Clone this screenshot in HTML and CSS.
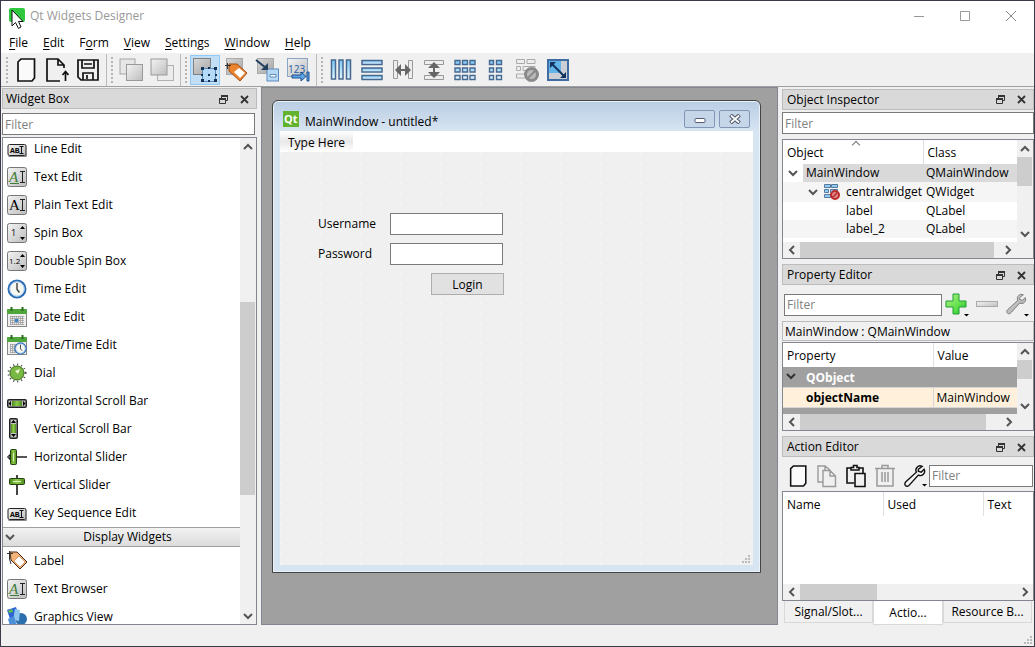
FILE: index.html
```html
<!DOCTYPE html>
<html lang="en">
<head>
    <meta charset="UTF-8">
    <meta name="viewport" content="width=device-width, initial-scale=1.0">
    <title>Qt Widgets Designer</title>
    <link rel="stylesheet" href="styles.css">
</head>
<body>

    <!-- shared icons -->
    <svg class="icon-defs" width="0" height="0" aria-hidden="true">
        <defs>
            <linearGradient id="gray" x1="0" y1="0" x2="1" y2="1">
                <stop offset="0" stop-color="#f4f4f4"/>
                <stop offset="1" stop-color="#bdbdbd"/>
            </linearGradient>
            <linearGradient id="dark-gray" x1="0" y1="0" x2="1" y2="1">
                <stop offset="0" stop-color="#d8d8d8"/>
                <stop offset="1" stop-color="#a4a4a4"/>
            </linearGradient>
            <linearGradient id="blue" x1="0" y1="0" x2="0" y2="1">
                <stop offset="0" stop-color="#7cc6f6"/>
                <stop offset="1" stop-color="#e4f5ff"/>
            </linearGradient>
            <linearGradient id="green" x1="0" y1="0" x2="1" y2="0">
                <stop offset="0" stop-color="#4c8a1c"/>
                <stop offset="0.5" stop-color="#8fcc4c"/>
                <stop offset="1" stop-color="#4c8a1c"/>
            </linearGradient>
            <linearGradient id="plus" x1="0" y1="0" x2="1" y2="1">
                <stop offset="0" stop-color="#b4f08a"/>
                <stop offset="0.6" stop-color="#5fe04a"/>
                <stop offset="1" stop-color="#1fb436"/>
            </linearGradient>
        </defs>
        <symbol id="up" viewBox="0 0 10 10"><path d="M1 7 5 3 9 7" fill="none" stroke="#555" stroke-width="2"/></symbol>
        <symbol id="down" viewBox="0 0 10 10"><path d="M1 3 5 7 9 3" fill="none" stroke="#555" stroke-width="2"/></symbol>
        <symbol id="left" viewBox="0 0 10 10"><path d="M7 1 3 5 7 9" fill="none" stroke="#555" stroke-width="2"/></symbol>
        <symbol id="right" viewBox="0 0 10 10"><path d="M3 1 7 5 3 9" fill="none" stroke="#555" stroke-width="2"/></symbol>
        <symbol id="float" viewBox="0 0 9 9"><path d="M2.500 3V1H8.500V5.500H6.500M.5 4H6.500V8.500H.5Z" fill="none" stroke="#333"/><path d="M2 1H9M0 4H7" stroke="#333" stroke-width="2"/></symbol>
        <symbol id="close" viewBox="0 0 9 9"><path d="M1 1 8 8M8 1 1 8" stroke="#333" stroke-width="1.800"/></symbol>
        <symbol id="page" viewBox="0 0 24 24"><path d="M7 1H20.500V20L18 23H4V4Z" fill="#fafafa" stroke="#111" stroke-width="1.700"/></symbol>
        <symbol id="wrench" viewBox="0 0 24 24"><path d="M20 2C16 0 12 4 14 8L3 18C0 21 4 25 7 21L16 11C20 13 24 9 22 5L19 8L16 7V5Z"/></symbol>
        <symbol id="textbox" viewBox="0 0 20 20"><rect x=".5" y=".5" width="19" height="19" rx="2" fill="url(#gray)" stroke="#777"/></symbol>
        <symbol id="linebox" viewBox="0 0 20 20">
            <rect x="1" y="5.500" width="18" height="11" rx="1.500" fill="url(#gray)" stroke="#222"/>
            <path d="M1.500 17.500H19.500V7" fill="none" stroke="#888"/>
            <path d="M12.500 7.500H16.500M12.500 14.500H16.500M14.500 7.500V14.500" stroke="#111"/>
        </symbol>
        <symbol id="ibeam" viewBox="0 0 20 20"><path d="M13 4.500H18M13 15.500H18M15.500 4V15" stroke="#222" fill="none"/></symbol>
        <symbol id="calendar" viewBox="0 0 20 20">
            <rect x=".5" y="3" width="19" height="16.500" fill="#eee" stroke="#888"/>
            <rect x="0" y="2" width="20" height="5" rx="1" fill="#4fa63a"/>
            <path d="M4.500 0V4M15.500 0V4" stroke="#2c6b20" stroke-width="2"/>
            <path d="M3 9.500H17M3 11.500H17M3 13.500H17M3 15.500H17M3 17.500H17M3.500 9V18M5.500 9V18M7.500 9V18M9.500 9V18M11.500 9V18M13.500 9V18M15.500 9V18" stroke="#999" stroke-width=".7"/>
        </symbol>
        <symbol id="clock" viewBox="0 0 20 20">
            <circle cx="10" cy="10" r="8.500" fill="#f6f6f2" stroke="#2b6cb5" stroke-width="2"/>
            <circle cx="10" cy="10" r="7.200" fill="none" stroke="#9cc4ea"/>
            <path d="M10 4V10.500L12.500 13.500" fill="none" stroke="#333" stroke-width="1.300"/>
        </symbol>
        <symbol id="tag" viewBox="0 0 20 20">
            <path d="M3 1 10 1 20 11 13 18 4 9Z" fill="#f3b47a" stroke="#4a2a10"/>
            <path d="M12 5 18 11 13 16 7 10Z" fill="#fff" stroke="#c47a3c" stroke-width=".6"/>
            <path d="M0 2.500H6M2.500 0V8L4 13" fill="none" stroke="#333"/>
        </symbol>
    </svg>

    <header class="titlebar">
        <svg class="app-icon" width="16" height="22" viewBox="0 0 16 22">
            <rect width="16" height="14" rx="2" fill="#2fc83f"/>
            <path d="M3 2V18L6.500 14.500 9.500 20.500 12 19 9.500 13.500H14Z" fill="#fff" stroke="#111"/>
        </svg>
        <h1>Qt Widgets Designer</h1>
        <div class="window-buttons">
            <button aria-label="Minimize"><svg width="12" height="12"><path d="M1 6.500H11" stroke="#999"/></svg></button>
            <button aria-label="Maximize"><svg width="12" height="12"><path d="M1.500 1.500H10.500V10.500H1.500Z" fill="none" stroke="#999"/></svg></button>
            <button aria-label="Close"><svg width="12" height="12"><path d="M1 1 11 11M11 1 1 11" stroke="#888"/></svg></button>
        </div>
    </header>

    <nav class="menubar">
        <a href="#"><u>F</u>ile</a>
        <a href="#"><u>E</u>dit</a>
        <a href="#">F<u>o</u>rm</a>
        <a href="#"><u>V</u>iew</a>
        <a href="#"><u>S</u>ettings</a>
        <a href="#"><u>W</u>indow</a>
        <a href="#"><u>H</u>elp</a>
    </nav>

    <div class="toolbar">
        <div class="tool-group">
            <button aria-label="New"><svg width="24" height="24"><use href="#page"/></svg></button>
            <button aria-label="Open"><svg width="24" height="24" fill="none" stroke="#111" stroke-width="1.700"><path d="M15 23H2V1H13L19 7V10M13 1V7H19M20.500 23V14M17.500 17 20.500 13.500 23.500 17" /></svg></button>
            <button aria-label="Save"><svg width="24" height="24" fill="none" stroke="#111" stroke-width="1.700"><path d="M2 2H22V22H5L2 19ZM6 2V10H18V2M7 22V15H17V22M11 17V21M8 6H16"/></svg></button>
        </div>
        <div class="tool-group">
            <button aria-label="Send to Back"><svg width="24" height="24"><rect x="1" y="1" width="15" height="15" fill="#e6e6e6" stroke="#a5a5a5"/><rect x="7.500" y="6.500" width="16" height="16" fill="url(#gray)" stroke="#999"/></svg></button>
            <button aria-label="Bring to Front"><svg width="24" height="24"><rect x="7.500" y="7.500" width="16" height="15" fill="#ececec" stroke="#b0b0b0"/><rect x="1" y="1" width="16" height="16" fill="url(#gray)" stroke="#999"/></svg></button>
        </div>
        <div class="tool-group">
            <button class="pressed" aria-label="Edit Widgets"><svg width="24" height="24"><rect x=".5" y=".5" width="17" height="16" fill="url(#dark-gray)" stroke="#808080"/><rect x="9.500" y="10.500" width="13" height="13" fill="#b5daf8" stroke="#5c8bbb"/><path d="M8 9h3v3h-3ZM21 9h3v3h-3ZM8 21h3v3h-3ZM21 21h3v3h-3ZM15 9h2v2h-2ZM15 16h2v2h-2ZM8 16h2v2h-2ZM22 16h2v2h-2ZM15 22h2v2h-2Z" fill="#143257"/></svg></button>
            <button aria-label="Edit Buddies"><svg width="24" height="24"><rect x="2.500" y=".5" width="16" height="16" fill="url(#dark-gray)" stroke="#aaa"/><path d="M5 6H13L23 15 16 23 5 13Z" fill="#ea8430" stroke="#a34c12"/><path d="M15 10 21 15 16 20 10 14Z" fill="#fff"/><path d="M1 7.500H7M3.500 5V11" stroke="#333"/></svg></button>
            <button aria-label="Edit Signals"><svg width="24" height="24"><rect x="2.500" y=".5" width="16" height="15" fill="url(#dark-gray)" stroke="#aaa"/><rect x="12" y="11" width="11.500" height="12" fill="#b5d8f5" stroke="#5c8bbb"/><path d="M15 16.500H21V19H15Z" fill="#fff" stroke="#5c8bbb"/><path d="M1 2 11 10" stroke="#24405f" stroke-width="2"/><path d="M13 5V12H6Z" fill="#24405f"/></svg></button>
            <button aria-label="Edit Tab Order"><svg width="24" height="24"><rect x="1.500" y=".5" width="20" height="18" fill="url(#gray)" stroke="#8aa5c4"/><text x="2" y="15" font-size="10" fill="#1f5fa8">123</text><path d="M6 17H15V14L20 18.500 15 23V20H6ZM21 14H23V23H21Z" fill="#5da5e6" stroke="#1d4f8f"/></svg></button>
        </div>
        <div class="tool-group layouts">
            <button aria-label="Lay Out Horizontally"><svg width="22" height="22" fill="url(#blue)" stroke="#46688f" stroke-width="1.500"><rect x="1.500" y="1" width="4" height="19"/><rect x="9" y="1" width="4" height="19"/><rect x="16.500" y="1" width="4" height="19"/></svg></button>
            <button aria-label="Lay Out Vertically"><svg width="22" height="22" fill="url(#blue)" stroke="#46688f" stroke-width="1.500"><rect x="1" y="1.500" width="20" height="4"/><rect x="1" y="9" width="20" height="4"/><rect x="1" y="16.500" width="20" height="4"/></svg></button>
            <button aria-label="Lay Out Horizontally in Splitter"><svg width="22" height="22"><path d="M1.500 1.500h4v18h-4ZM16.500 1.500h4v18h-4Z" fill="#eee" stroke="#999"/><path d="M3 11 9 5V17ZM19 11 13 5V17Z" fill="#666"/><path d="M7 11H15" stroke="#666" stroke-width="2"/></svg></button>
            <button aria-label="Lay Out Vertically in Splitter"><svg width="22" height="22"><path d="M1.500 1.500h19v4h-19ZM1.500 16.500h19v4h-19Z" fill="#eee" stroke="#999"/><path d="M11 3 5 9H17ZM11 19 5 13H17Z" fill="#666"/><path d="M11 7V15" stroke="#666" stroke-width="2"/></svg></button>
            <button aria-label="Lay Out in a Grid"><svg width="22" height="22" fill="url(#blue)" stroke="#46688f" stroke-width="1.400"><path d="M1 1.500h5v4h-5ZM8.500 1.500h5v4h-5ZM16 1.500h5v4h-5ZM1 9h5v4h-5ZM8.500 9h5v4h-5ZM16 9h5v4h-5ZM1 16.500h5v4h-5ZM8.500 16.500h5v4h-5ZM16 16.500h5v4h-5Z"/></svg></button>
            <button aria-label="Lay Out in a Form"><svg width="22" height="22" fill="url(#blue)" stroke="#46688f" stroke-width="1.400"><path d="M4.500 1.500h4v4h-4ZM11.500 1.500h5v4h-5ZM4.500 9h4v4h-4ZM11.500 9h5v4h-5ZM4.500 16.500h4v4h-4ZM11.500 16.500h5v4h-5Z"/></svg></button>
            <button aria-label="Break Layout"><svg width="24" height="24"><path d="M1.500 1.500h8v4h-8ZM12 1.500h8v4h-8ZM1.500 8.500h4v4h-4ZM8 8.500h12v4h-12ZM1.500 16h9v4h-9Z" fill="#eee" stroke="#aaa"/><circle cx="16.500" cy="16.500" r="6" fill="#bbb" stroke="#8a8a8a" stroke-width="3"/><path d="M12 21 21 12" stroke="#8a8a8a" stroke-width="2"/></svg></button>
            <button aria-label="Adjust Size"><svg width="22" height="22"><rect x="1" y="1" width="20" height="20" fill="#ccd0d4" stroke="#3f6da3" stroke-width="2"/><rect x="2" y="2" width="12" height="12" fill="#62b4ea"/><path d="M5 5 17 17" stroke="#12335f" stroke-width="2"/><path d="M3 3H9L3 9ZM19 19H13L19 13Z" fill="#12335f"/></svg></button>
        </div>
    </div>

    <main>
        <section class="dock widget-box">
            <div class="dock-title">
                <h2>Widget Box</h2>
                <button aria-label="Float"><svg width="9" height="9"><use href="#float"/></svg></button>
                <button aria-label="Close"><svg width="9" height="9"><use href="#close"/></svg></button>
            </div>
            <input class="filter" type="text" placeholder="Filter" aria-label="Filter widgets">
            <div class="widget-list">
                <ul>
                    <li><svg width="20" height="20"><use href="#linebox"/><text class="small-glyph" x="3" y="14">AB</text></svg>Line Edit</li>
                    <li><svg width="20" height="20"><use href="#textbox"/><text class="glyph" x="2" y="15" font-style="italic" fill="#3d7d35">A</text><path d="M3 16.500H12" stroke="#3d7d35"/><use href="#ibeam"/></svg>Text Edit</li>
                    <li><svg width="20" height="20"><use href="#textbox"/><text class="glyph" x="2" y="15">A</text><use href="#ibeam"/></svg>Plain Text Edit</li>
                    <li><svg width="20" height="20"><use href="#textbox"/><text x="4" y="13" font-size="9">1</text><path d="M13 6 15.500 3 18 6ZM13 14 15.500 17 18 14Z"/></svg>Spin Box</li>
                    <li><svg width="20" height="20"><use href="#textbox"/><text x="2" y="13" font-size="8">1.2</text><path d="M13 6 15.500 3 18 6ZM13 14 15.500 17 18 14Z"/></svg>Double Spin Box</li>
                    <li><svg width="20" height="20"><use href="#clock"/></svg>Time Edit</li>
                    <li><svg width="20" height="20"><use href="#calendar"/><rect x="8" y="12" width="3" height="3" fill="#3a86d0"/></svg>Date Edit</li>
                    <li><svg width="20" height="20"><use href="#calendar"/><use href="#clock" x="7" y="7" width="13" height="13"/></svg>Date/Time Edit</li>
                    <li><svg width="20" height="20"><circle cx="10" cy="10" r="8.500" fill="none" stroke="#444" stroke-width="2" stroke-dasharray="1 3"/><circle cx="10" cy="10" r="7" fill="#79b843" stroke="#3c6e1a"/><path d="M8 8 13 6 11 11Z" fill="#f1f7d8"/></svg>Dial</li>
                    <li><svg width="20" height="20"><rect x="0" y="8" width="20" height="9" rx="2" fill="#222"/><rect x="1.500" y="9.500" width="17" height="6" fill="#c4c4c4"/><rect x="5" y="10" width="10" height="5" fill="url(#green)"/><path d="M4 10V15L1.500 12.500ZM16 10V15L18.500 12.500Z"/></svg>Horizontal Scroll Bar</li>
                    <li><svg width="20" height="22"><rect x="2" y="0" width="9" height="21" rx="2" fill="#222"/><rect x="3.500" y="1.500" width="6" height="18" fill="#c4c4c4"/><rect x="4" y="6" width="5" height="9" fill="url(#green)"/><path d="M4 5H9L6.500 2ZM4 16H9L6.500 19Z"/></svg>Vertical Scroll Bar</li>
                    <li><svg width="20" height="20"><path d="M0 10 4 6V14Z"/><path d="M1 10H20" stroke="#555" stroke-width="2"/><rect x="3.500" y="2.500" width="6" height="15" rx="1" fill="url(#green)" stroke="#243f10"/><path d="M6.500 6V14" stroke="#e0f0c0"/></svg>Horizontal Slider</li>
                    <li><svg width="20" height="20"><path d="M10 0V20" stroke="#444" stroke-width="2"/><rect x="2.500" y="3.500" width="15" height="6" rx="1" fill="url(#green)" stroke="#243f10"/><path d="M6 6.500H14" stroke="#e0f0c0"/></svg>Vertical Slider</li>
                    <li><svg width="20" height="20"><use href="#linebox"/><text class="small-glyph" x="3" y="14">AB</text></svg>Key Sequence Edit</li>
                </ul>
                <button class="category"><svg width="10" height="10"><use href="#down"/></svg><span>Display Widgets</span></button>
                <ul>
                    <li><svg width="20" height="20"><use href="#tag"/></svg>Label</li>
                    <li><svg width="20" height="20"><use href="#textbox"/><text class="glyph" x="2" y="15" font-style="italic" fill="#3d7d35">A</text><path d="M3 16.500H12" stroke="#3d7d35"/><use href="#ibeam"/></svg>Text Browser</li>
                    <li><svg width="20" height="20"><circle cx="14" cy="12" r="6" fill="#2c6fae"/><path d="M0 3 9 0 12 9 3 12Z" fill="#2d62d8"/><path d="M1 4 5 2 6 5 2 6Z" fill="#5cc04a"/><path d="M8 2 13 3 12 14 6 13Z" fill="#8fc6ee"/><path d="M1 12 7 9 10 19H3Z" fill="#4b8fd8"/></svg>Graphics View</li>
                </ul>
            </div>
            <div class="vscroll"><svg width="10" height="10"><use href="#up"/></svg><i class="thumb"></i><svg width="10" height="10"><use href="#down"/></svg></div>
        </section>

        <section class="mdi-area">
            <div class="subwindow">
                <div class="sub-title">
                    <svg width="16" height="16"><rect width="16" height="16" fill="#62b32e"/><text x="1" y="12" font-size="11" font-weight="bold" fill="#fff">Qt</text></svg>
                    <h2>MainWindow - untitled*</h2>
                    <button aria-label="Minimize"><svg width="12" height="10"><rect x="1" y="4.500" width="10" height="4" rx="1" fill="#fff" stroke="#555b70"/></svg></button>
                    <button aria-label="Close"><svg width="12" height="10"><path d="M1.500 1 10.500 9M10.500 1 1.500 9" stroke="#555b70" stroke-width="4"/><path d="M2 1.500 10 8.500M10 1.500 2 8.500" stroke="#fff" stroke-width="1.700"/></svg></button>
                </div>
                <div class="sub-menu"><a href="#">Type Here</a></div>
                <form class="canvas" onsubmit="return false">
                    <label for="username">Username</label>
                    <input id="username" type="text">
                    <label for="password">Password</label>
                    <input id="password" type="password">
                    <button>Login</button>
                    <svg class="grip" width="8" height="8"><path d="M6 0h2v2h-2ZM3 3h2v2h-2ZM6 3h2v2h-2ZM0 6h2v2h-2ZM3 6h2v2h-2ZM6 6h2v2h-2Z" fill="#bbb"/></svg>
                </form>
            </div>
        </section>

        <aside>
            <section class="dock inspector">
                <div class="dock-title">
                    <h2>Object Inspector</h2>
                    <button aria-label="Float"><svg width="9" height="9"><use href="#float"/></svg></button>
                    <button aria-label="Close"><svg width="9" height="9"><use href="#close"/></svg></button>
                </div>
                <input class="filter" type="text" placeholder="Filter" aria-label="Filter objects">
                <div class="view">
                    <div class="view-body">
                        <table>
                            <thead>
                                <tr><th class="sorted">Object</th><th>Class</th></tr>
                            </thead>
                            <tbody>
                                <tr class="current"><td><div class="level-1"><svg width="10" height="10"><use href="#down"/></svg><span>MainWindow</span></div></td><td>QMainWindow</td></tr>
                                <tr class="shade"><td><div class="level-2"><svg width="10" height="10"><use href="#down"/></svg><svg width="16" height="16"><path d="M.5 .5h6v3h-6ZM7.500 .5h6v3h-6ZM.5 5.500h4v3h-4ZM6.500 5.500h7v3h-7ZM.5 10.500h6v3h-6Z" fill="#8fcdf5" stroke="#58789b"/><circle cx="11" cy="11" r="4" fill="#d98a88" stroke="#bd2a2a" stroke-width="2"/><path d="M8 14 14 8" stroke="#bd2a2a" stroke-width="1.500"/></svg><span>centralwidget</span></div></td><td>QWidget</td></tr>
                                <tr><td><div class="level-3">label</div></td><td>QLabel</td></tr>
                                <tr class="shade"><td><div class="level-3">label_2</div></td><td>QLabel</td></tr>
                            </tbody>
                        </table>
                    </div>
                    <div class="vscroll"><svg width="10" height="10"><use href="#up"/></svg><i class="thumb"></i><svg width="10" height="10"><use href="#down"/></svg></div>
                    <div class="hscroll"><svg width="10" height="10"><use href="#left"/></svg><i class="thumb"></i><svg width="10" height="10"><use href="#right"/></svg></div>
                </div>
            </section>

            <section class="dock properties">
                <div class="dock-title">
                    <h2>Property Editor</h2>
                    <button aria-label="Float"><svg width="9" height="9"><use href="#float"/></svg></button>
                    <button aria-label="Close"><svg width="9" height="9"><use href="#close"/></svg></button>
                </div>
                <div class="property-tools">
                    <input class="filter" type="text" placeholder="Filter" aria-label="Filter properties">
                    <button aria-label="Add Property"><svg width="24" height="24"><path d="M8 1H14V8H21V14H14V21H8V14H1V8H8Z" fill="url(#plus)" stroke="#1fa032"/><path d="M19 21H24L21.500 23.500Z"/></svg></button>
                    <button aria-label="Remove Property"><svg width="24" height="24"><rect x="1.500" y="8.500" width="21" height="5" fill="url(#gray)" stroke="#aaa"/></svg></button>
                    <button aria-label="Configure Properties"><svg width="24" height="24"><use href="#wrench" width="22" height="22" fill="url(#dark-gray)" stroke="#777"/><path d="M19 21H24L21.500 23.500Z"/></svg></button>
                </div>
                <div class="class-name">MainWindow : QMainWindow</div>
                <div class="view">
                    <div class="view-body">
                        <table>
                            <thead>
                                <tr><th>Property</th><th>Value</th></tr>
                            </thead>
                            <tbody>
                                <tr class="group"><td colspan="2"><svg width="10" height="10"><path d="M1 2 5 6 9 2" fill="none" stroke="#333" stroke-width="2"/></svg><span>QObject</span></td></tr>
                                <tr class="property"><td>objectName</td><td>MainWindow</td></tr>
                                <tr class="group"><td colspan="2"></td></tr>
                            </tbody>
                        </table>
                    </div>
                    <div class="vscroll"><svg width="10" height="10"><use href="#up"/></svg><i class="thumb"></i><svg width="10" height="10"><use href="#down"/></svg></div>
                    <div class="hscroll"><svg width="10" height="10"><use href="#left"/></svg><i class="thumb"></i><svg width="10" height="10"><use href="#right"/></svg></div>
                </div>
            </section>

            <section class="dock actions">
                <div class="dock-title">
                    <h2>Action Editor</h2>
                    <button aria-label="Float"><svg width="9" height="9"><use href="#float"/></svg></button>
                    <button aria-label="Close"><svg width="9" height="9"><use href="#close"/></svg></button>
                </div>
                <div class="action-tools">
                    <button aria-label="New Action"><svg width="22" height="24"><use href="#page"/></svg></button>
                    <button aria-label="Copy"><svg width="22" height="24" fill="none" stroke="#999" stroke-width="1.400"><path d="M7 18H2V2H9L14 6M9 2V6M7 6.500H14L19.500 12V22.500H7ZM14 6.500V12H19.500"/></svg></button>
                    <button aria-label="Paste"><svg width="22" height="24" fill="none" stroke="#111" stroke-width="1.600"><path d="M9 19H2V4H6M14 4H18V9M6 6V3.500H8.500V1.500H12V3.500H14V6ZM10 9.500H20V22.500H10Z"/></svg></button>
                    <button aria-label="Delete"><svg width="22" height="24" fill="none" stroke="#999" stroke-width="1.500"><path d="M3 5V22H19V5M1 4.500H21M8 4V1.500H14V4M8 8V18M11 8V18M14 8V18"/></svg></button>
                    <button aria-label="Configure"><svg width="24" height="24"><use href="#wrench" width="23" height="24" fill="#f5f5f5" stroke="#111" stroke-width="1.500"/><path d="M19 20H24L21.500 22.500Z"/></svg></button>
                    <input class="filter" type="text" placeholder="Filter" aria-label="Filter actions">
                </div>
                <div class="view">
                    <div class="view-body">
                        <table>
                            <thead>
                                <tr><th>Name</th><th>Used</th><th>Text</th></tr>
                            </thead>
                        </table>
                    </div>
                    <div class="hscroll"><svg width="10" height="10"><use href="#left"/></svg><i class="thumb"></i><svg width="10" height="10"><use href="#right"/></svg></div>
                </div>
            </section>

            <div class="tabs">
                <button>Signal/Slot...</button>
                <button class="active">Actio...</button>
                <button>Resource B...</button>
            </div>
        </aside>
    </main>

    <footer class="statusbar">
        <svg width="8" height="8"><path d="M6 0h2v2h-2ZM3 3h2v2h-2ZM6 3h2v2h-2ZM0 6h2v2h-2ZM3 6h2v2h-2ZM6 6h2v2h-2Z" fill="#bbb"/></svg>
    </footer>

</body>
</html>
```

FILE: styles.css
```css
* {
    box-sizing: border-box;
}

body {
    margin: 0;
    height: 100vh;
    display: flex;
    flex-direction: column;
    border: 1px solid #3a3a48;
    background-color: #f0f0f0;
    color: #000;
    font-family: "Open Sans", "Noto Sans", sans-serif;
    font-size: 12px;
    line-height: 16px;
    overflow: hidden;
}

h1, h2 {
    margin: 0;
    font-size: 12px;
    font-weight: normal;
    white-space: nowrap;
}

button {
    display: flex;
    align-items: center;
    justify-content: center;
    padding: 0;
    border: none;
    background: none;
    color: inherit;
    font: inherit;
}

input {
    font: inherit;
    border: 1px solid #7a7a7a;
    background-color: white;
    border-radius: 0;
    padding: 0 2px;
    min-width: 0;
}

input::placeholder {
    color: #808080;
}

svg {
    flex: none;
}

a {
    color: inherit;
    text-decoration: none;
}

.icon-defs {
    position: absolute;
}

/* Title bar and menu */
.titlebar {
    display: flex;
    align-items: center;
    height: 30px;
    padding-left: 8px;
    background-color: white;
}

.app-icon {
    margin: 6px 5px 0 0;
}

.titlebar h1 {
    flex: 1;
    color: #999;
}

.window-buttons {
    display: flex;
}

.window-buttons button {
    width: 46px;
    height: 28px;
}

.menubar {
    display: flex;
    height: 22px;
    align-items: center;
    padding: 2px 0 0 8px;
    gap: 15px;
    background-color: white;
}

.menubar u {
    text-underline-offset: 2px;
}

/* Toolbar */
.toolbar {
    display: flex;
    height: 34px;
    padding: 1px 0 0 1px;
    border-bottom: 1px solid #a0a0a0;
}

.tool-group {
    display: flex;
    align-items: center;
    gap: 1px;
    padding: 0 3px 0 4px;
    border-right: 1px solid #bbb;
}

.tool-group.layouts {
    border-right: none;
}

.tool-group::before {
    content: "";
    width: 2px;
    height: 26px;
    margin-right: 2px;
    background: repeating-linear-gradient(#b5b5b5 0 2px, transparent 2px 4px);
}

.tool-group button {
    width: 30px;
    height: 30px;
}

.tool-group .pressed {
    background-color: #c2def5;
    border: 1px solid #90c8f6;
}

/* Docks */
main {
    flex: 1;
    display: flex;
    min-height: 0;
}

.dock-title {
    display: flex;
    align-items: center;
    height: 21px;
    padding: 1px 1px 0 4px;
    background-color: #d9d9d9;
    border: 1px solid #bcbcbc;
}

.dock-title h2 {
    flex: 1;
}

.dock-title button {
    width: 21px;
    height: 18px;
}

.filter {
    height: 22px;
}

.widget-box {
    width: 256px;
    margin: 1px 4px 0 0;
    padding-left: 1px;
    display: grid;
    grid-template: 21px 22px 1fr / 1fr 17px;
    row-gap: 3px;
}

.widget-box .dock-title {
    padding-left: 3px;
}

.widget-box .dock-title,
.widget-box .filter {
    grid-column: 1 / 3;
}

.widget-box .filter {
    margin: 1px 2px 0 0;
}

.widget-list {
    border: 1px solid #828790;
    border-right: none;
    background-color: white;
    overflow: hidden;
}

.widget-list ul {
    margin: 0;
    padding: 0;
    list-style: none;
}

.widget-list ul:first-child {
    margin-top: -3px;
}

.widget-list li {
    display: flex;
    align-items: center;
    gap: 7px;
    height: 28px;
    padding-left: 4px;
}

.glyph {
    font-family: "Liberation Serif", serif;
    font-size: 15px;
}

.small-glyph {
    font-family: "Liberation Mono", monospace;
    font-size: 8px;
    font-weight: bold;
}

.category {
    width: 100%;
    height: 20px;
    padding-left: 2px;
    border-top: 1px solid #a0a0a0;
    border-bottom: 1px solid #a0a0a0;
    background: linear-gradient(#f2f2f2, #dcdcdc);
}

.category span {
    flex: 1;
}

/* Scroll bars */
.vscroll, .hscroll {
    display: grid;
    place-items: center;
    background-color: #f0f0f0;
}

.thumb {
    grid-area: 3 / 1;
    width: 100%;
    height: 100%;
    background-color: #cdcdcd;
}

.vscroll svg:last-child {
    grid-row: 5;
}

.hscroll .thumb {
    grid-area: 1 / 3;
}

.hscroll svg:last-child {
    grid-column: 5;
}

.widget-box .vscroll {
    border: 1px solid #828790;
    border-left: none;
    padding-right: 1px;
    grid-template-rows: 17px 147fr 194fr 112fr 17px;
}

.inspector .vscroll {
    grid-template-rows: 17px 0 29fr 38fr 17px;
}

.inspector .hscroll {
    grid-template-columns: 17px 0 193fr 6fr 17px;
}

.properties .vscroll {
    grid-template-rows: 17px 0 18fr 18fr 17px;
}

.properties .hscroll {
    grid-template-columns: 17px 0 185fr 14fr 17px;
}

.actions .hscroll {
    grid-template-columns: 17px 0 77fr 139fr 17px;
}

/* Form window */
.mdi-area {
    flex: 1;
    padding: 12px 16px 0 10px;
    background-color: #a0a0a0;
    border: 1px solid #828790;
}

.subwindow {
    display: flex;
    flex-direction: column;
    height: calc(100% - 51px);
    padding: 0 7px 7px;
    background: linear-gradient(#b9cde3, #d7e4f2 30px);
    border: 1px solid #444;
    border-radius: 6px 6px 0 0;
    box-shadow: inset 0 0 0 1px #eaf2fa;
}

.sub-title {
    display: flex;
    align-items: center;
    gap: 4px;
    height: 30px;
    padding: 6px 3px 0;
}

.sub-title h2 {
    flex: 1;
    padding: 6px 0 0 2px;
}

.sub-title button {
    width: 31px;
    height: 18px;
    border: 1px solid #8295b5;
    border-radius: 2px;
    background-color: #c5d6e9;
}

.sub-menu {
    display: flex;
    height: 21px;
    background-color: white;
}

.sub-menu a {
    padding: 4px 8px 1px;
    background: linear-gradient(#fff, #e8e8e8 50%, #fff);
}

/* the form grid: one white dot every 10px */
.canvas {
    position: relative;
    flex: 1;
    display: grid;
    grid-template-columns: 72px 114px;
    grid-auto-rows: 22px;
    row-gap: 8px;
    padding: 61px 0 0 38px;
    background:
        linear-gradient(90deg, transparent 1px, #f0f0f0 1px) 0 1px / 10px 10px,
        linear-gradient(#fff 1px, #f0f0f0 1px) 0 1px / 10px 10px;
}

.canvas label {
    line-height: 22px;
}

.canvas input {
    width: 113px;
}

.canvas button {
    grid-column: 2;
    justify-self: end;
    width: 73px;
    padding-top: 2px;
    background-color: #e1e1e1;
    border: 1px solid #adadad;
}

.grip {
    position: absolute;
    right: 3px;
    bottom: 2px;
}

/* Right column */
aside {
    display: flex;
    flex-direction: column;
    width: 256px;
    padding: 2px 0 0 4px;
}

.view {
    flex: 1;
    display: grid;
    grid-template: 1fr 16px / 1fr 16px;
    min-height: 0;
    border: 1px solid #828790;
    background-color: white;
}

.view .vscroll {
    padding-right: 1px;
}

.view-body {
    overflow: hidden;
}

.hscroll {
    grid-column: 1 / 3;
}

.inspector .hscroll, .properties .hscroll {
    padding-right: 16px;
}

.actions .view-body {
    grid-column: 1 / 3;
}

table {
    width: 100%;
    border-collapse: collapse;
    table-layout: fixed;
}

th {
    height: 24px;
    padding: 2px 4px 0;
    font-weight: normal;
    text-align: left;
}

th + th {
    border-left: 1px solid #e0e0e0;
}

td {
    height: 18px;
    padding: 0 3px;
    white-space: nowrap;
}

.inspector {
    display: flex;
    flex-direction: column;
    height: 170px;
    margin-bottom: 5px;
}

.inspector .dock-title {
    padding-top: 0;
}

.inspector .filter {
    margin: 2px 0 5px;
}

.inspector th:first-child {
    width: 140px;
}

.sorted {
    position: relative;
}

.sorted::after {
    content: "";
    position: absolute;
    top: 2px;
    left: 50%;
    width: 5px;
    height: 5px;
    border: solid #777;
    border-width: 1px 0 0 1px;
    transform: rotate(45deg);
}

.inspector td:first-child {
    padding: 0;
}

.inspector td div {
    display: flex;
    align-items: center;
}

.level-1 {
    height: 18px;
    padding-left: 5px;
    background: linear-gradient(90deg, #fff 20px, transparent 20px);
    gap: 8px;
}

.level-2 {
    height: 20px;
    padding-left: 25px;
    gap: 6px;
}

.level-3 {
    padding-left: 63px;
}

.current {
    background-color: #d9d9d9;
}

.shade {
    background-color: #f5f5f5;
}

.properties {
    display: flex;
    flex-direction: column;
    height: 167px;
    margin-bottom: 5px;
}

.property-tools {
    display: flex;
    align-items: center;
    gap: 6px;
    height: 36px;
    padding: 3px 5px 0 2px;
}

.property-tools .filter {
    flex: 1;
    margin-right: -3px;
}

.class-name {
    height: 20px;
    margin-bottom: 1px;
    padding: 2px 2px 0;
    border: 1px solid #bcbcbc;
}

.properties th:first-child {
    width: 150px;
}

.properties .group {
    background-color: #a0a0a0;
    color: white;
    font-weight: bold;
}

.group svg {
    margin-right: 10px;
}

.properties .property {
    background-color: #fff0db;
}

.properties td {
    height: 20px;
    padding-top: 2px;
    border-bottom: 1px solid #d6d6d6;
}

.property td:first-child {
    padding-left: 23px;
    font-weight: bold;
}

.property td + td {
    border-left: 1px solid #d6d6d6;
}

.actions {
    flex: 1;
    display: flex;
    flex-direction: column;
    min-height: 0;
}

.action-tools {
    display: flex;
    align-items: center;
    gap: 7px;
    height: 34px;
    padding: 3px 1px 0 5px;
}

.action-tools .filter {
    flex: 1;
    margin-left: -5px;
}

.actions th:first-child, .actions th:nth-child(2) {
    width: 100px;
}

.tabs {
    display: flex;
    align-items: flex-start;
    height: 24px;
    padding: 0 2px;
}

.tabs button {
    flex: 1 0 88px;
    height: 22px;
    border: 1px solid #d9d9d9;
    border-top: none;
    white-space: nowrap;
}

.tabs .active {
    flex: 0 0 70px;
    height: 24px;
    padding-top: 1px;
    background-color: white;
}

.statusbar {
    display: flex;
    align-items: flex-end;
    justify-content: flex-end;
    height: 21px;
    padding: 2px;
}
```
